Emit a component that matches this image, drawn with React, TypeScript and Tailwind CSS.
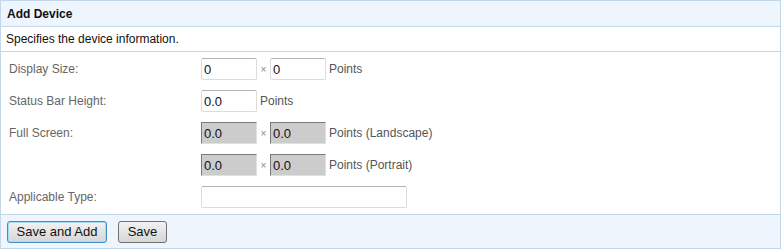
import * as React from "react";

type FieldProps = {
  value: string;
  disabled?: boolean;
  wide?: boolean;
};

function Field({ value, disabled, wide }: FieldProps) {
  if (disabled) {
    return (
      <input
        readOnly
        value={value}
        className="w-[56px] h-[22px] px-[2px] text-[13px] text-[#111] bg-[#cccccc] border border-t-[#7a7a7a] border-l-[#7a7a7a] border-r-[#e0e0e0] border-b-[#e0e0e0] outline-none"
      />
    );
  }
  return (
    <input
      readOnly
      value={value}
      className={`${wide ? "w-[206px]" : "w-[56px]"} h-[22px] px-[2px] text-[13px] text-[#111] bg-white border border-[#dcdcdc] border-t-[#b4b4b4] rounded-[2px] outline-none`}
    />
  );
}

function Row({ label, children }: { label: string; children?: React.ReactNode }) {
  return (
    <div className="flex items-center h-[32px]">
      <div className="w-[200px] pl-[8px] text-[12px] text-[#666]">{label}</div>
      <div className="flex items-center">{children}</div>
    </div>
  );
}

const Times = () => <span className="w-[13px] text-center text-[10px] text-[#888]">×</span>;
const Unit = ({ text }: { text: string }) => <span className="ml-[3px] text-[12px] text-[#555]">{text}</span>;

export default function App() {
  return (
    <div className="w-[781px] h-[250px] bg-white" style={{ fontFamily: '"Liberation Sans", Arial, sans-serif' }}>
      <div className="w-[781px] h-[249px] border border-[#c3d7ea] flex flex-col">
        <div className="h-[26px] bg-[#eff5fd] border-b border-[#c3d7ea] flex items-center pl-[6px] text-[12px] font-bold text-[#111]">
          Add Device
        </div>
        <div className="h-[25px] border-b border-[#c3d7ea] flex items-center pl-[5px] text-[12px] text-[#111]">
          Specifies the device information.
        </div>
        <div className="flex flex-col pt-px h-[162px]">
          <Row label="Display Size:">
            <Field value="0" />
            <Times />
            <Field value="0" />
            <Unit text="Points" />
          </Row>
          <Row label="Status Bar Height:">
            <Field value="0.0" />
            <Unit text="Points" />
          </Row>
          <Row label="Full Screen:">
            <Field value="0.0" disabled />
            <Times />
            <Field value="0.0" disabled />
            <Unit text="Points (Landscape)" />
          </Row>
          <Row label="">
            <Field value="0.0" disabled />
            <Times />
            <Field value="0.0" disabled />
            <Unit text="Points (Portrait)" />
          </Row>
          <Row label="Applicable Type:">
            <Field value="" wide />
          </Row>
        </div>
        <div className="flex-1 bg-[#eff5fd] border-t border-[#c3d7ea] flex items-center pl-[6px] gap-[11px]">
          <button className="h-[22px] w-[100px] text-[13px] text-[#111] rounded-[3px] border border-[#3c8fc8] bg-gradient-to-b from-[#f2f2f2] to-[#d6d6d6] shadow-[inset_0_0_0_1px_#a8dcf5]">
            Save and Add
          </button>
          <button className="h-[22px] w-[49px] text-[13px] text-[#111] rounded-[3px] border border-[#707070] bg-gradient-to-b from-[#f2f2f2] to-[#d6d6d6]">
            Save
          </button>
        </div>
      </div>
    </div>
  );
}
